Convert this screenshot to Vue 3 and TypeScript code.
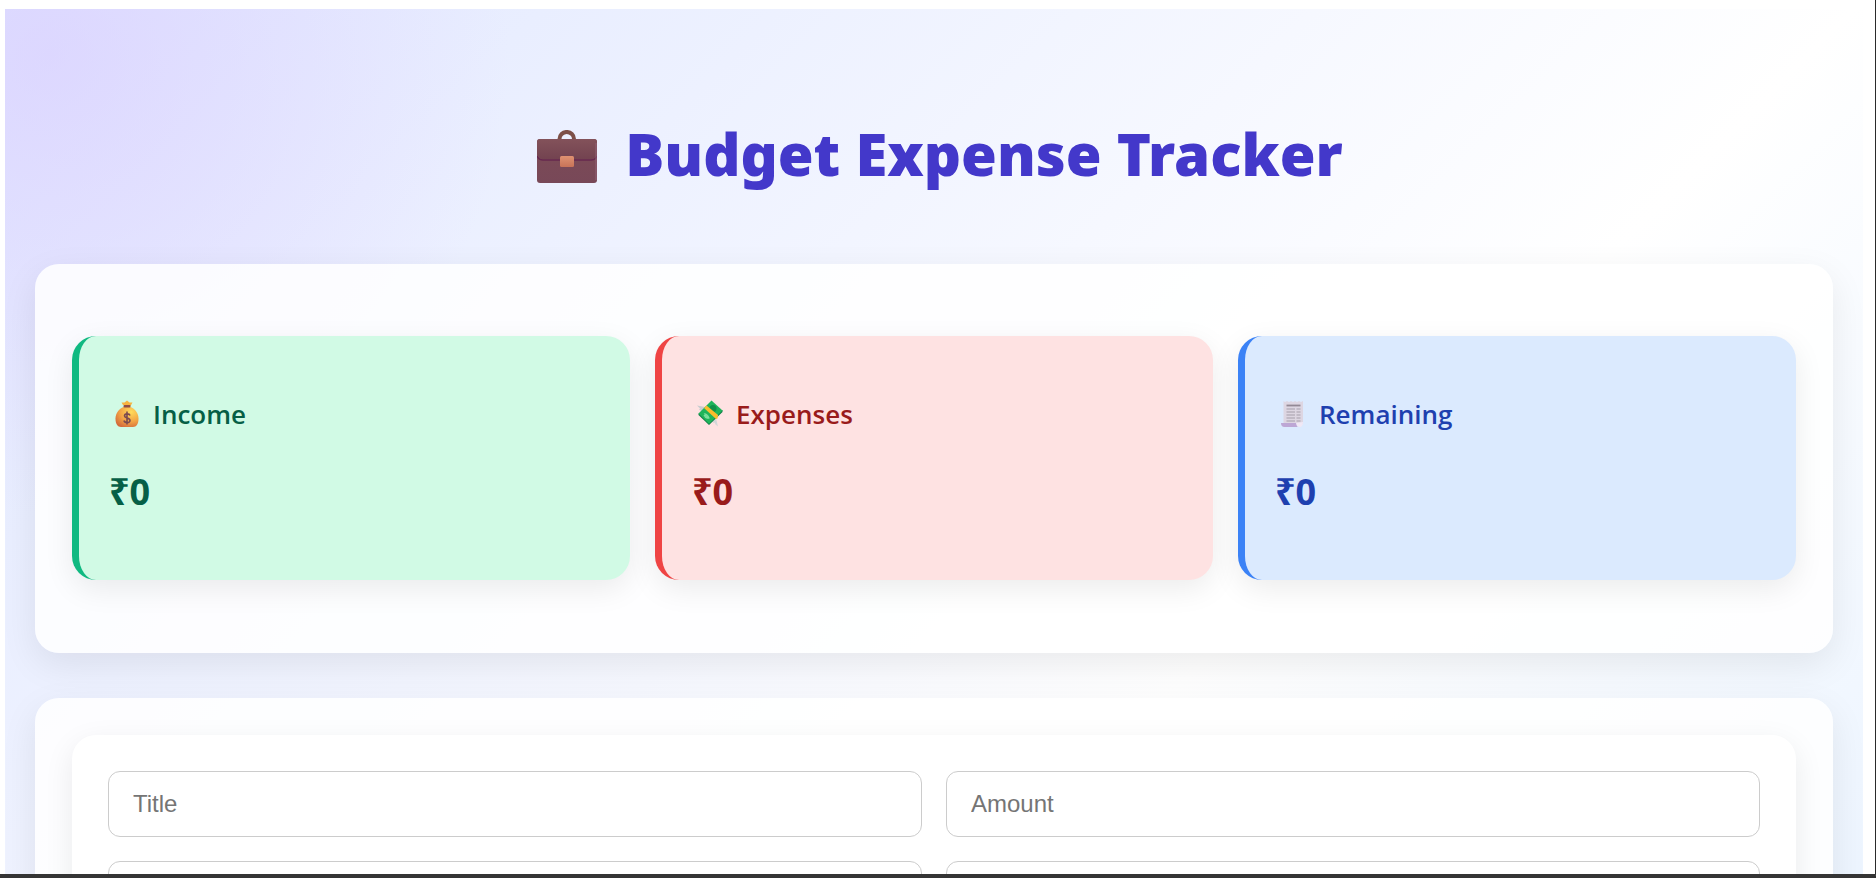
<script setup lang="ts">
import { computed, reactive } from 'vue'

interface Entry {
  kind: 'income' | 'expense'
  amount: number
}

const entries = reactive<Entry[]>([])
const form = reactive({ title: '', amount: '', category: '', date: '' })

const total = (kind: Entry['kind']) =>
  entries.filter((e) => e.kind === kind).reduce((sum, e) => sum + e.amount, 0)

const income = computed(() => total('income'))
const expenses = computed(() => total('expense'))
const remaining = computed(() => income.value - expenses.value)
</script>

<template>
  <div class="window">
    <main class="page">
      <h1 class="title">
        <svg class="briefcase" viewBox="0 0 60 53" aria-hidden="true">
          <defs>
            <linearGradient id="caseBody" x1="0" y1="0" x2="0" y2="1">
              <stop offset="0" stop-color="#7c4b56" />
              <stop offset="1" stop-color="#784858" />
            </linearGradient>
            <linearGradient id="caseFlap" x1="0" y1="0" x2="0" y2="1">
              <stop offset="0" stop-color="#83525a" />
              <stop offset="1" stop-color="#734350" />
            </linearGradient>
            <linearGradient id="caseClasp" x1="0" y1="0" x2="0" y2="1">
              <stop offset="0" stop-color="#df9272" />
              <stop offset="1" stop-color="#c87358" />
            </linearGradient>
          </defs>
          <path d="M22.500 10V9A7.200 7 0 0 1 37 9V10" fill="none" stroke="#7d5048" stroke-width="4" />
          <rect x="0" y="9" width="60" height="44" rx="3" fill="url(#caseBody)" />
          <path d="M0 26Q2 30 6 30H54Q58 30 60 26" fill="none" stroke="#67284f" stroke-width="1.500" />
          <path d="M0 12Q0 9 3 9H57Q60 9 60 12V24Q58 29 54 29H6Q2 29 0 24Z" fill="url(#caseFlap)" />
          <path d="M59 13V50" stroke="#936276" stroke-width="1" />
          <rect x="23" y="26" width="14" height="11" rx="1.500" fill="url(#caseClasp)" />
        </svg>
        <span>Budget Expense Tracker</span>
      </h1>

      <section class="panel summary" aria-label="Summary">
        <article class="card card-income">
          <h3 class="card-label">
            <svg class="glyph" viewBox="0 0 28 28" aria-hidden="true">
              <defs>
                <radialGradient id="bag" cx="0.680" cy="0.250" r="0.850">
                  <stop offset="0" stop-color="#ffdc5c" />
                  <stop offset="0.550" stop-color="#f3a545" />
                  <stop offset="1" stop-color="#d36a3b" />
                </radialGradient>
              </defs>
              <path d="M10 5L8.500 2.500L11.500 2.500L14 0.500L16.500 2.500L19.500 2.500L17.500 6Z" fill="#f7b33f" />
              <path d="M10.500 7C6 9 2.500 13 2.500 18.500C2.500 24 4.500 27 8 27H20C23.500 27 25.500 24 25.500 18.500C25.500 13 22 9 17.500 7Z" fill="url(#bag)" />
              <rect x="10.500" y="5" width="7" height="2.500" rx="1" fill="#8e4d45" />
              <path d="M17 15.500C16.500 13.500 11.500 13 11.500 16C11.500 18.500 17 17.500 17 20.500C17 23.500 11.500 23 11 20.500M14 11.500V24.500" fill="none" stroke="#7b4a4f" stroke-width="1.600" />
            </svg>
            <span>Income</span>
          </h3>
          <p class="card-value">₹{{ income }}</p>
        </article>

        <article class="card card-expense">
          <h3 class="card-label">
            <svg class="glyph" viewBox="0 0 28 28" aria-hidden="true">
              <path d="M1 5.500L12 7.500L7 14.500L5 12L6 11.500L3 9.500L4 8.500Z" fill="#c9cdd0" />
              <path d="M19 14L22 26.500L19.500 24.500L18.500 22.500L17.500 23L15 20Z" fill="#d4d6d8" />
              <path d="M2.500 13.500V15L13 25L26.500 12V10Z" fill="#0b7a43" />
              <path d="M2.500 13.500L13 24L26.500 10.500L15.500 0.500Z" fill="#1fb45a" />
              <circle cx="17" cy="8.500" r="3.500" fill="#129149" />
              <path d="M8 14Q10 13 12 16T12 18Q10 19 8 15M9 14.500L12 18" fill="none" stroke="#7ee09d" stroke-width="1.200" />
              <path d="M8 8L10.500 5.500L22 15L21.500 18.500L20 19Z" fill="#fbbd2c" />
            </svg>
            <span>Expenses</span>
          </h3>
          <p class="card-value">₹{{ expenses }}</p>
        </article>

        <article class="card card-remaining">
          <h3 class="card-label">
            <svg class="glyph" viewBox="0 0 28 28" aria-hidden="true">
              <path d="M4.500 1L6 2L8 1L10 2L12 1L14 2L16 1L18 2L20 1L22 2L24 1V24H4.500Z" fill="#ddd6e2" />
              <path d="M2 23H18Q17 27 19.500 27H5.500Q2 27 2 23Z" fill="#bda7d5" />
              <path d="M17 23Q17.500 26.500 20.500 27Q24 27 24 22Z" fill="#f0e8f5" />
              <path d="M7.500 5.500H21.500" stroke="#938995" stroke-width="1.800" />
              <path d="M7.500 9H16M17.500 9H21.500M7.500 12H16M17.500 12H21.500M7.500 15H16M17.500 15H21.500M7.500 18H16M17.500 18H21.500M7.500 21H16M17.500 21H21.500" stroke="#a69da9" stroke-width="1.200" />
            </svg>
            <span>Remaining</span>
          </h3>
          <p class="card-value">₹{{ remaining }}</p>
        </article>
      </section>

      <section class="panel entry" aria-label="Add entry">
        <form class="form" @submit.prevent>
          <input v-model="form.title" class="field" type="text" placeholder="Title" aria-label="Title" />
          <input v-model="form.amount" class="field" type="text" inputmode="decimal" placeholder="Amount" aria-label="Amount" />
          <input v-model="form.category" class="field" type="text" aria-label="Category" />
          <input v-model="form.date" class="field" type="text" aria-label="Date" />
        </form>
      </section>
    </main>
  </div>
</template>

<style>
body {
  margin: 0;
  background: #333;
}
</style>

<style scoped>
.window {
  box-sizing: border-box;
  height: 100vh;
  padding: 9px 12px 0 5px;
  overflow: hidden;
  border-right: 1px solid #2b2b2b;
  border-bottom: 4px solid #353535;
  border-bottom-left-radius: 3px;
  background: #fff;
  font-family: 'Open Sans', 'Noto Sans', sans-serif;
}

.page {
  box-sizing: border-box;
  min-height: 1840px;
  padding: 0 30px;
  background:
    radial-gradient(circle at 45px 45px, rgba(214, 192, 255, 0.42), rgba(214, 192, 255, 0) 460px),
    linear-gradient(135deg, #e0e7ff 0%, #fff 50%, #e8f2ff 80%, #e0f7fa 100%);
}

.title {
  display: flex;
  align-items: center;
  justify-content: center;
  gap: 28px;
  margin: 0;
  padding: 105px 0 70px 12px;
  color: #4338ca;
  font-family: 'Noto Sans', 'Open Sans', sans-serif;
  font-size: 58px;
  font-weight: 900;
  line-height: 80px;
}

.briefcase {
  width: 60px;
  height: 53px;
  margin-top: 4px;
}

.panel {
  border-radius: 24px;
  background: rgba(255, 255, 255, 0.85);
  box-shadow: 0 12px 36px rgba(0, 0, 0, 0.08);
}

.summary {
  display: grid;
  grid-template-columns: repeat(3, 1fr);
  gap: 25px;
  padding: 72px 37px 73px;
}

.card {
  box-sizing: border-box;
  height: 244px;
  padding: 60px 30px;
  border-left: 7px solid;
  border-radius: 24px;
  box-shadow: 0 9px 30px rgba(0, 0, 0, 0.08);
}

.card-income {
  border-color: #10b981;
  background: #d1fae5;
  color: #065f46;
}

.card-expense {
  border-color: #ef4444;
  background: #fee2e2;
  color: #991b1b;
}

.card-remaining {
  border-color: #3b82f6;
  background: #dbeafe;
  color: #1e40af;
}

.card-label {
  display: flex;
  align-items: center;
  gap: 12px;
  margin: 0;
  padding-left: 4px;
  font-size: 26px;
  font-weight: 600;
  line-height: 36px;
}

.glyph {
  width: 28px;
  height: 28px;
}

.card-value {
  margin: 35px 0 0;
  font-size: 36px;
  font-weight: 700;
  line-height: 50px;
}

.entry {
  margin-top: 45px;
  padding: 37px;
}

.form {
  display: grid;
  grid-template-columns: 1fr 1fr;
  gap: 24px;
  padding: 36px;
  border-radius: 24px;
  background: #fff;
  box-shadow: 0 9px 30px rgba(0, 0, 0, 0.08);
}

.field {
  box-sizing: border-box;
  width: 100%;
  height: 66px;
  padding: 0 24px;
  border: 1px solid #ccc;
  border-radius: 12px;
  background: #fff;
  color: #222;
  font-family: 'Liberation Sans', Arial, sans-serif;
  font-size: 24px;
}

.field::placeholder {
  color: #757575;
}
</style>
